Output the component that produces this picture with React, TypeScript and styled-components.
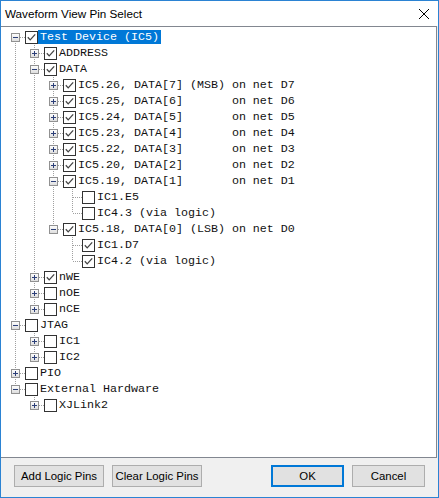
import React from 'react';
import styled, { createGlobalStyle } from 'styled-components';

const GlobalStyle = createGlobalStyle`
  html, body {
    margin: 0;
    padding: 0;
    background: #ffffff;
  }
  * {
    box-sizing: border-box;
  }
`;

const DOT = '#a0a0a0';

const vline = (y: number, h: number) =>
  `repeating-linear-gradient(to bottom, ${DOT} 0 1px, transparent 1px 2px) 9px ${y}px / 1px ${h}px no-repeat`;

const hline = () =>
  `repeating-linear-gradient(to right, ${DOT} 0 1px, transparent 1px 2px) 10px 8px / 9px 1px no-repeat`;

const Window = styled.div`
  width: 439px;
  height: 498px;
  border: 1px solid #2b83d3;
  background: #f0f0f0;
  display: flex;
  flex-direction: column;
  font-family: 'Liberation Sans', Arial, sans-serif;
`;

const TitleBar = styled.div`
  height: 25px;
  flex: none;
  background: #ffffff;
  display: flex;
  align-items: center;
  justify-content: space-between;
  padding: 0 9px 0 4px;
  font-size: 11.7px;
  color: #000000;
`;

const TreeBox = styled.div`
  flex: none;
  height: 432px;
  margin-right: 1px;
  background: #ffffff;
  border-top: 1px solid #828790;
  border-right: 1px solid #828790;
  border-bottom: 1px solid #828790;
  padding: 2px 0 0 5px;
  font-family: 'Liberation Mono', 'Courier New', monospace;
  font-size: 11.67px;
  color: #000000;
`;

const Row = styled.div`
  display: flex;
  align-items: flex-start;
  height: 16px;
`;

const Guide = styled.span<{ $line: boolean }>`
  flex: none;
  width: 19px;
  height: 16px;
  background: ${(p) => (p.$line ? vline(0, 16) : 'none')};
`;

const Connector = styled.span<{ $up: boolean; $down: boolean }>`
  flex: none;
  width: 19px;
  height: 16px;
  display: flex;
  justify-content: center;
  align-items: flex-start;
  padding-top: 4px;
  background: ${(p) =>
    [hline(), p.$up ? vline(0, 8) : null, p.$down ? vline(8, 8) : null]
      .filter(Boolean)
      .join(', ')};

  svg {
    display: block;
  }
`;

const BoxSlot = styled.span`
  flex: none;
  width: 13px;
  height: 13px;
  margin-top: 2px;

  svg {
    display: block;
  }
`;

const Label = styled.span<{ $selected?: boolean }>`
  margin-top: 1px;
  height: 14px;
  line-height: 14px;
  padding: 0 2px;
  white-space: pre;
  background: ${(p) => (p.$selected ? '#0078d7' : 'transparent')};
  color: ${(p) => (p.$selected ? '#ffffff' : '#111111')};
`;

const Footer = styled.div`
  flex: 1;
  display: flex;
  align-items: flex-start;
  padding: 7px 13px 0 13px;
  gap: 8px;
`;

const Spacer = styled.div`
  flex: 1;
`;

const Button = styled.button<{ $wide?: boolean; $default?: boolean }>`
  width: ${(p) => (p.$wide ? '90px' : '73px')};
  height: 22px;
  margin: 0;
  padding: 0;
  background: #e1e1e1;
  border: 1px solid ${(p) => (p.$default ? '#0078d7' : '#adadad')};
  box-shadow: ${(p) => (p.$default ? 'inset 0 0 0 1px #0078d7' : 'none')};
  font-family: 'Liberation Sans', Arial, sans-serif;
  font-size: 11.4px;
  color: #000000;
`;

type TreeNode = {
  label: string;
  checked?: boolean;
  expander?: 'plus' | 'minus';
  selected?: boolean;
  children?: TreeNode[];
};

const tree: TreeNode[] = [
  {
    label: 'Test Device (IC5)',
    checked: true,
    expander: 'minus',
    selected: true,
    children: [
      { label: 'ADDRESS', checked: true, expander: 'plus' },
      {
        label: 'DATA',
        checked: true,
        expander: 'minus',
        children: [
          { label: 'IC5.26, DATA[7] (MSB) on net D7', checked: true, expander: 'plus' },
          { label: 'IC5.25, DATA[6]       on net D6', checked: true, expander: 'plus' },
          { label: 'IC5.24, DATA[5]       on net D5', checked: true, expander: 'plus' },
          { label: 'IC5.23, DATA[4]       on net D4', checked: true, expander: 'plus' },
          { label: 'IC5.22, DATA[3]       on net D3', checked: true, expander: 'plus' },
          { label: 'IC5.20, DATA[2]       on net D2', checked: true, expander: 'plus' },
          {
            label: 'IC5.19, DATA[1]       on net D1',
            checked: true,
            expander: 'minus',
            children: [
              { label: 'IC1.E5' },
              { label: 'IC4.3 (via logic)' },
            ],
          },
          {
            label: 'IC5.18, DATA[0] (LSB) on net D0',
            checked: true,
            expander: 'minus',
            children: [
              { label: 'IC1.D7', checked: true },
              { label: 'IC4.2 (via logic)', checked: true },
            ],
          },
        ],
      },
      { label: 'nWE', checked: true, expander: 'plus' },
      { label: 'nOE', expander: 'plus' },
      { label: 'nCE', expander: 'plus' },
    ],
  },
  {
    label: 'JTAG',
    expander: 'minus',
    children: [
      { label: 'IC1', expander: 'plus' },
      { label: 'IC2', expander: 'plus' },
    ],
  },
  { label: 'PIO', expander: 'plus' },
  {
    label: 'External Hardware',
    expander: 'minus',
    children: [{ label: 'XJLink2', expander: 'plus' }],
  },
];

const Expander = ({ open }: { open: boolean }) => (
  <svg width="9" height="9" viewBox="0 0 9 9">
    <defs>
      <linearGradient id="exp-bg" x1="0" y1="0" x2="0" y2="1">
        <stop offset="0" stopColor="#ffffff" />
        <stop offset="1" stopColor="#dcdcdc" />
      </linearGradient>
    </defs>
    <rect x="0.5" y="0.5" width="8" height="8" fill="url(#exp-bg)" stroke="#919191" />
    <line x1="2" y1="4.5" x2="7" y2="4.5" stroke="#2c3f78" />
    {!open && <line x1="4.5" y1="2" x2="4.5" y2="7" stroke="#2c3f78" />}
  </svg>
);

const CheckBox = ({ checked }: { checked?: boolean }) => (
  <svg width="13" height="13" viewBox="0 0 13 13">
    <rect x="0.5" y="0.5" width="12" height="12" fill="#ffffff" stroke="#333333" />
    {checked && (
      <polyline
        points="2.8,6.3 5.2,8.9 10.2,3.4"
        fill="none"
        stroke="#444444"
        strokeWidth="1.3"
      />
    )}
  </svg>
);

const CloseIcon = () => (
  <svg width="10" height="10" viewBox="0 0 10 10">
    <line x1="0" y1="0" x2="10" y2="10" stroke="#000000" strokeWidth="1" />
    <line x1="10" y1="0" x2="0" y2="10" stroke="#000000" strokeWidth="1" />
  </svg>
);

const renderNodes = (
  nodes: TreeNode[],
  guides: boolean[],
  isRoot: boolean,
  path: string
): React.ReactNode[] => {
  const rows: React.ReactNode[] = [];
  nodes.forEach((node, i) => {
    const last = i === nodes.length - 1;
    const key = `${path}-${i}`;
    rows.push(
      <Row key={key}>
        {guides.map((g, gi) => (
          <Guide key={gi} $line={g} />
        ))}
        <Connector $up={!(isRoot && i === 0)} $down={!last}>
          {node.expander && <Expander open={node.expander === 'minus'} />}
        </Connector>
        <BoxSlot>
          <CheckBox checked={node.checked} />
        </BoxSlot>
        <Label $selected={node.selected}>{node.label}</Label>
      </Row>
    );
    if (node.children && node.expander === 'minus') {
      rows.push(...renderNodes(node.children, [...guides, !last], false, key));
    }
  });
  return rows;
};

export default function App() {
  return (
    <>
      <GlobalStyle />
      <Window>
        <TitleBar>
          <span>Waveform View Pin Select</span>
          <CloseIcon />
        </TitleBar>
        <TreeBox>{renderNodes(tree, [], true, 'n')}</TreeBox>
        <Footer>
          <Button $wide>Add Logic Pins</Button>
          <Button $wide>Clear Logic Pins</Button>
          <Spacer />
          <Button $default>OK</Button>
          <Button>Cancel</Button>
        </Footer>
      </Window>
    </>
  );
}
